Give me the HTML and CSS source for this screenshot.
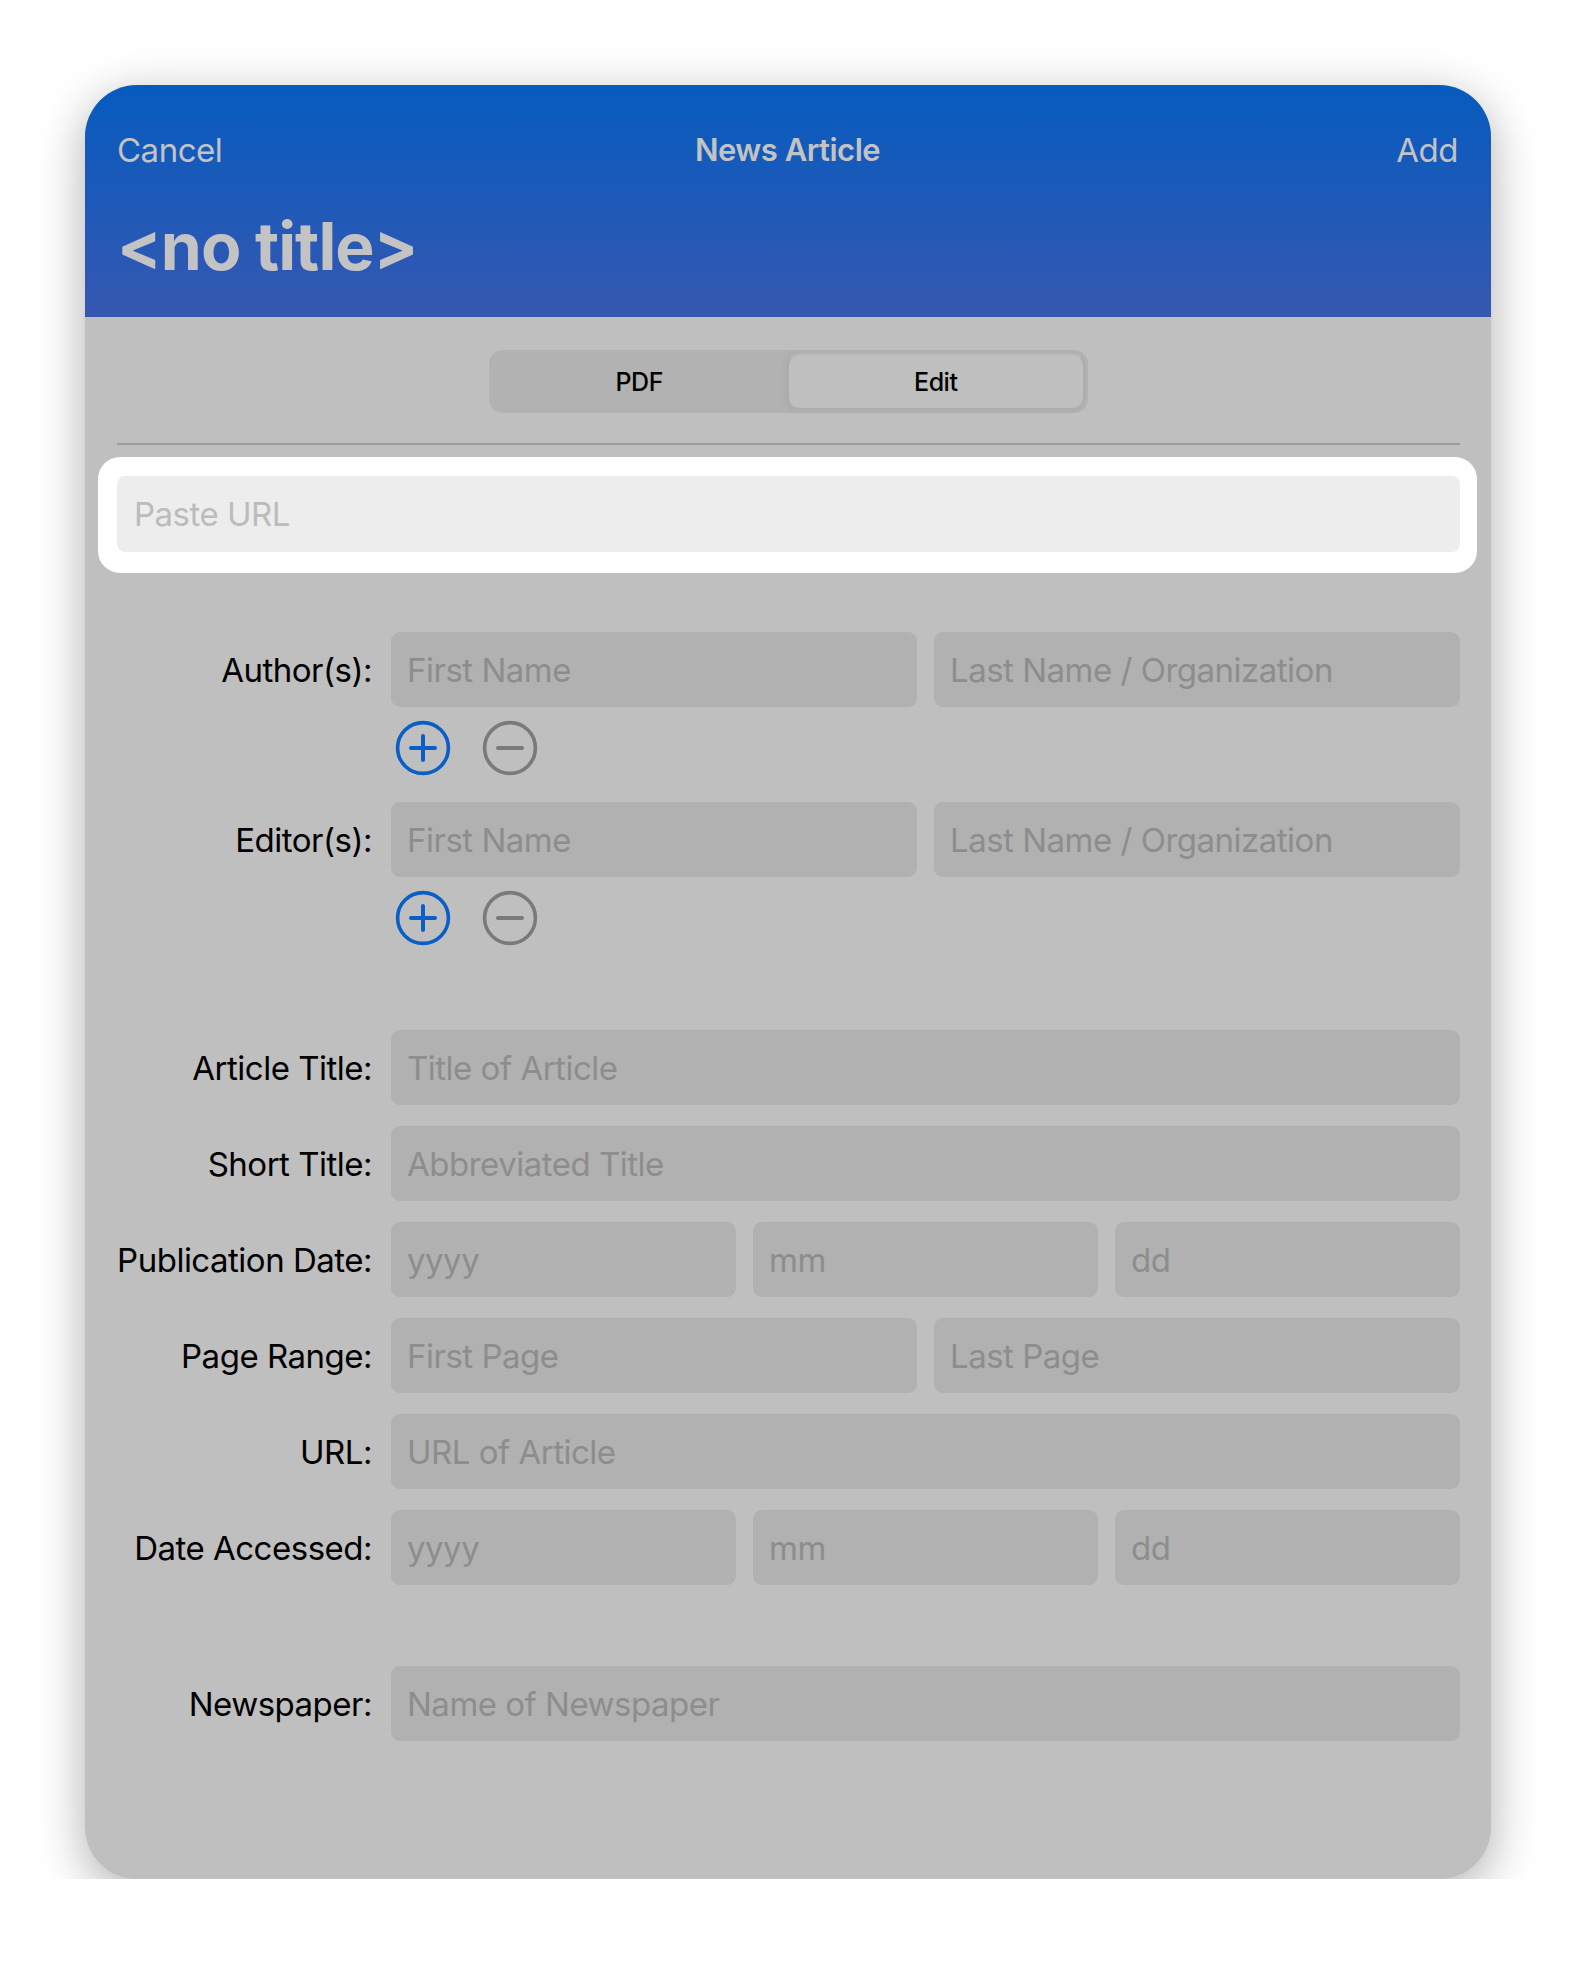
FILE: index.html
```html
<!DOCTYPE html>
<html lang="en">
<head>
    <meta charset="UTF-8">
    <meta name="viewport" content="width=device-width, initial-scale=1.0">
    <title>News Article</title>
    <link rel="stylesheet" href="styles.css">
</head>
<body>
    <div class="sheet">
        <header class="sheet__header">
            <div class="nav">
                <span class="nav__btn">Cancel</span>
                <span class="nav__title">News Article</span>
                <span class="nav__btn nav__btn--right">Add</span>
            </div>
            <h1 class="sheet__title">&lt;no title&gt;</h1>
        </header>

        <div class="sheet__body">
            <div class="segment">
                <div class="segment__item">PDF</div>
                <div class="segment__item segment__item--active">Edit</div>
            </div>

            <hr class="divider">

            <div class="paste">
                <input class="paste__input" type="text" placeholder="Paste URL">
            </div>

            <div class="form form--people">
                <label class="form__label">Author(s):</label>
                <div class="form__fields form__fields--2">
                    <input class="field" type="text" placeholder="First Name">
                    <input class="field" type="text" placeholder="Last Name / Organization">
                </div>
                <span></span>
                <div class="form__actions">
                    <svg class="icon" viewBox="0 0 56 56"><circle cx="28" cy="28" r="25.4" fill="none" stroke="#0a5fc6" stroke-width="3.6"/><path d="M28 16v24M16 28h24" stroke="#0a5fc6" stroke-width="4" stroke-linecap="round"/></svg>
                    <svg class="icon" viewBox="0 0 56 56"><circle cx="28" cy="28" r="25.4" fill="none" stroke="#7a7a7a" stroke-width="3.6"/><path d="M16 28h24" stroke="#7a7a7a" stroke-width="4" stroke-linecap="round"/></svg>
                </div>

                <label class="form__label form__label--gap">Editor(s):</label>
                <div class="form__fields form__fields--2 form__label--gap">
                    <input class="field" type="text" placeholder="First Name">
                    <input class="field" type="text" placeholder="Last Name / Organization">
                </div>
                <span></span>
                <div class="form__actions">
                    <svg class="icon" viewBox="0 0 56 56"><circle cx="28" cy="28" r="25.4" fill="none" stroke="#0a5fc6" stroke-width="3.6"/><path d="M28 16v24M16 28h24" stroke="#0a5fc6" stroke-width="4" stroke-linecap="round"/></svg>
                    <svg class="icon" viewBox="0 0 56 56"><circle cx="28" cy="28" r="25.4" fill="none" stroke="#7a7a7a" stroke-width="3.6"/><path d="M16 28h24" stroke="#7a7a7a" stroke-width="4" stroke-linecap="round"/></svg>
                </div>
            </div>

            <div class="form form--main">
                <label class="form__label">Article Title:</label>
                <input class="field" type="text" placeholder="Title of Article">

                <label class="form__label">Short Title:</label>
                <input class="field" type="text" placeholder="Abbreviated Title">

                <label class="form__label">Publication Date:</label>
                <div class="form__fields form__fields--3">
                    <input class="field" type="text" placeholder="yyyy">
                    <input class="field" type="text" placeholder="mm">
                    <input class="field" type="text" placeholder="dd">
                </div>

                <label class="form__label">Page Range:</label>
                <div class="form__fields form__fields--2">
                    <input class="field" type="text" placeholder="First Page">
                    <input class="field" type="text" placeholder="Last Page">
                </div>

                <label class="form__label">URL:</label>
                <input class="field" type="text" placeholder="URL of Article">

                <label class="form__label">Date Accessed:</label>
                <div class="form__fields form__fields--3">
                    <input class="field" type="text" placeholder="yyyy">
                    <input class="field" type="text" placeholder="mm">
                    <input class="field" type="text" placeholder="dd">
                </div>
            </div>

            <div class="form form--main form--last">
                <label class="form__label">Newspaper:</label>
                <input class="field" type="text" placeholder="Name of Newspaper">
            </div>
        </div>
    </div>
</body>
</html>
```

FILE: styles.css
```css
:root {
    --headerTop: #065bbf;
    --headerBottom: #3658b1;
    --headerText: #c3c3c3;
    --bodyBg: #bfbfbf;
    --fieldBg: #b1b1b1;
    --placeholder: #8d8d8d;
    --labelWidth: 255px;
}

html,
body {
    margin: 0;
    background: #fff;
    font-family: Inter, "Liberation Sans", sans-serif;
    letter-spacing: -0.5px;
}

.sheet {
    width: 1406px;
    height: 1794px;
    margin: 85px auto 0;
    border-radius: 52px;
    overflow: hidden;
    background: var(--bodyBg);
    box-shadow: 0 12px 48px rgba(0, 0, 0, 0.32);
}

.sheet__header {
    height: 232px;
    box-sizing: border-box;
    padding: 45px 33px 0 32px;
    background: linear-gradient(var(--headerTop), var(--headerBottom));
    color: var(--headerText);
}

.nav {
    display: flex;
    justify-content: space-between;
    font-size: 33px;
    line-height: 40px;
}

.nav__btn {
    width: 200px;
}

.nav__btn--right {
    text-align: right;
}

.nav__title {
    font-size: 31px;
    font-weight: 600;
}

.sheet__title {
    margin: 41px 0 0;
    font-size: 66px;
    line-height: 70px;
    font-weight: 700;
    letter-spacing: -1px;
}

.sheet__body {
    padding: 33px 31px 0 32px;
}

.segment {
    display: flex;
    width: 599px;
    height: 63px;
    box-sizing: border-box;
    margin: 0 auto;
    padding: 3px;
    border-radius: 14px;
    background: #b2b2b2;
}

.segment__item {
    flex: 1;
    display: flex;
    align-items: center;
    justify-content: center;
    border-radius: 12px;
    font-size: 25px;
    font-weight: 500;
    color: #000;
}

.segment__item--active {
    background: var(--bodyBg);
    border: 2px solid #acacac;
    border-top-color: #b6b6b6;
    box-shadow: -3px 0 6px rgba(0, 0, 0, 0.04);
}

.divider {
    margin: 30px 0 0;
    border: 0;
    border-top: 2px solid #9c9c9c;
}

.paste {
    margin: 12px -17px 0 -19px;
    padding: 19px 17px 21px 19px;
    border-radius: 22px;
    background: #fff;
}

.paste__input {
    display: block;
    width: 100%;
    height: 76px;
    box-sizing: border-box;
    padding: 0 17px;
    border: 0;
    border-radius: 8px;
    background: #ededed;
    font: inherit;
    font-size: 33px;
    letter-spacing: inherit;
}

.paste__input::placeholder {
    color: #bcbcbc;
}

.form {
    display: grid;
    grid-template-columns: var(--labelWidth) 1fr;
    column-gap: 19px;
    align-items: center;
}

.form--people {
    margin-top: 59px;
}

.form--main {
    margin-top: 84px;
    row-gap: 21px;
}

.form--last {
    margin-top: 81px;
}

.form__label {
    text-align: right;
    white-space: nowrap;
    font-size: 33px;
    color: #000;
}

.form__label--gap {
    margin-top: 26px;
}

.form__fields {
    display: grid;
    column-gap: 17px;
}

.form__fields--2 {
    grid-template-columns: 1fr 1fr;
}

.form__fields--3 {
    grid-template-columns: 1fr 1fr 1fr;
}

.form__actions {
    display: flex;
    gap: 31px;
    margin-top: 13px;
    padding-left: 4px;
}

.icon {
    width: 56px;
    height: 56px;
    display: block;
}

.field {
    display: block;
    width: 100%;
    min-width: 0;
    height: 75px;
    box-sizing: border-box;
    padding: 0 16px;
    border: 0;
    border-radius: 9px;
    background: var(--fieldBg);
    font: inherit;
    font-size: 33px;
    letter-spacing: inherit;
    color: #000;
}

.field::placeholder {
    color: var(--placeholder);
}
```
